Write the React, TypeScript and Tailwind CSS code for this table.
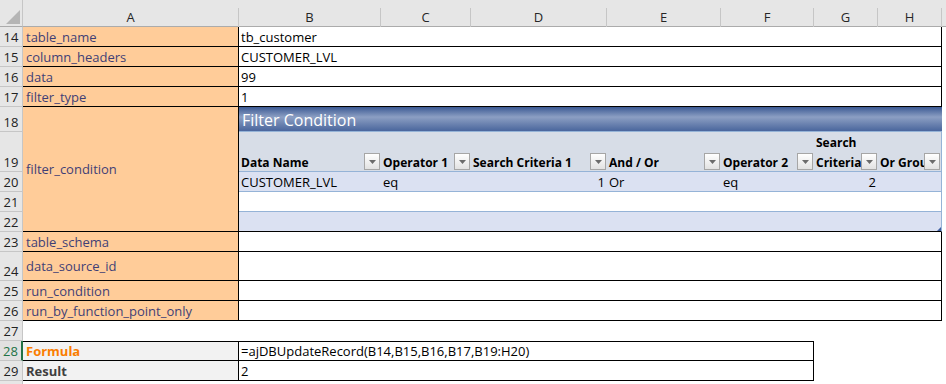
import React from "react";

const letters = ["A", "B", "C", "D", "E", "F", "G", "H"];

const rowHead =
  "flex items-end justify-center bg-[#e6e6e6] border-b border-r border-[#c6c6c6] text-[13px] leading-[18px] text-[#222]";
const label =
  "flex items-center bg-[#ffcc99] border-b border-r border-black pl-[3px] pt-[2px] text-[13px] text-[#3f3f76] whitespace-nowrap overflow-hidden";
const value =
  "col-span-7 flex items-center bg-white border-b border-r border-black pl-[2px] pt-[2px] text-[13px] text-black whitespace-nowrap";

const params = [
  { n: 14, name: "table_name", v: "tb_customer" },
  { n: 15, name: "column_headers", v: "CUSTOMER_LVL" },
  { n: 16, name: "data", v: "99" },
  { n: 17, name: "filter_type", v: "1" },
];

const params2 = [
  { n: 23, name: "table_schema" },
  { n: 24, name: "data_source_id" },
  { n: 25, name: "run_condition" },
  { n: 26, name: "run_by_function_point_only" },
];

const headers = [
  "Data Name",
  "Operator 1",
  "Search Criteria 1",
  "And / Or",
  "Operator 2",
  "Search Criteria 2",
  "Or Group",
];

const body = [
  [
    { t: "CUSTOMER_LVL" },
    { t: "eq" },
    { t: "1", r: true },
    { t: "Or" },
    { t: "eq" },
    { t: "2", r: true },
    { t: "" },
  ],
  [{}, {}, {}, {}, {}, {}, {}],
  [{}, {}, {}, {}, {}, {}, {}],
] as { t?: string; r?: boolean }[][];

function Dropdown() {
  return (
    <div className="absolute right-[1px] bottom-[1px] flex h-[17px] w-[16px] items-center justify-center border border-[#a6a6a6] bg-[linear-gradient(to_bottom,#ffffff,#e2e2e2)]">
      <svg width="7" height="4" viewBox="0 0 7 4">
        <path d="M0 0h7L3.5 4z" fill="#6b6b6b" />
      </svg>
    </div>
  );
}

export default function App() {
  return (
    <div className="grid h-[384px] w-[946px] grid-cols-[23px_216px_142px_90px_136px_114px_93px_64px_64px_4px] grid-rows-[27px_20px_20px_20px_20px_25px_40px_20px_20px_20px_20px_29px_20px_20px_20px_20px_20px_3px] overflow-hidden bg-white font-['Open_Sans',sans-serif]">
      {/* column headers */}
      <div className="flex items-end justify-end border-r border-b border-r-[#c6c6c6] border-b-[#ababab] bg-[#e6e6e6] p-[2px]">
        <svg width="14" height="14" viewBox="0 0 14 14">
          <path d="M14 0V14H0z" fill="#b5b5b5" />
        </svg>
      </div>
      {letters.map((l) => (
        <div key={l} className="flex flex-col border-b border-[#ababab] bg-[#e6e6e6] pt-[8px]">
          <div className="flex flex-1 items-center justify-center border-r border-[#c6c6c6] text-[13px] text-[#262626]">
            {l}
          </div>
        </div>
      ))}
      <div className="border-b border-[#ababab] bg-[#e6e6e6]" />

      {/* rows 14-17 */}
      {params.map((p) => (
        <React.Fragment key={p.n}>
          <div className={rowHead}>{p.n}</div>
          <div className={label}>{p.name}</div>
          <div className={value}>{p.v}</div>
          <div />
        </React.Fragment>
      ))}

      {/* row 18: table title */}
      <div className={rowHead}>18</div>
      <div className="row-span-5 flex items-center bg-[#ffcc99] border-b border-r border-black pl-[3px] pt-[2px] text-[13px] text-[#3f3f76]">
        filter_condition
      </div>
      <div className="col-span-7 flex items-end border-b border-[#95b3d7] bg-[linear-gradient(to_bottom,#3c5a94_0%,#8c9fc3_42%,#6c83b0_70%,#4a669d_100%)] pb-[1px] pl-[3px] text-[16px] leading-[20px] text-white">
        Filter Condition
      </div>
      <div />

      {/* row 19: table headers */}
      <div className={rowHead}>19</div>
      {headers.map((h, i) => (
        <div
          key={h}
          className={
            "relative flex items-end overflow-hidden border-b border-[#95b3d7] bg-[#d7dde7] pl-[2px] text-[12px] font-bold leading-[20px] text-black " +
            (i === 5 ? "whitespace-normal " : "whitespace-nowrap ") +
            (i === 6 ? "border-r" : "")
          }
        >
          <span className="mb-[-2px]">{h}</span>
          <Dropdown />
        </div>
      ))}
      <div />

      {/* rows 20-22: table body */}
      {body.map((row, ri) => (
        <React.Fragment key={ri}>
          <div className={rowHead}>{20 + ri}</div>
          {row.map((c, ci) => (
            <div
              key={ci}
              className={
                "relative flex items-center whitespace-nowrap border-b px-[2px] pt-[2px] text-[13px] text-black " +
                (ri === 1 ? "bg-white " : "bg-[#dbe1f2] ") +
                (ri === 2 ? "border-b-black " : "border-b-[#95b3d7] ") +
                (ci === 6 ? "border-r border-r-[#95b3d7] " : "") +
                (c.r ? "justify-end" : "")
              }
            >
              {c.t}
              {ri === 2 && ci === 6 && (
                <svg className="absolute right-0 bottom-0" width="4" height="4" viewBox="0 0 4 4">
                  <path d="M4 0V4H0z" fill="#3f5ea0" />
                </svg>
              )}
            </div>
          ))}
          <div />
        </React.Fragment>
      ))}

      {/* rows 23-26 */}
      {params2.map((p) => (
        <React.Fragment key={p.n}>
          <div className={rowHead}>{p.n}</div>
          <div className={label}>{p.name}</div>
          <div className={value} />
          <div />
        </React.Fragment>
      ))}

      {/* row 27 */}
      <div className={rowHead}>27</div>
      <div className="col-span-9" />

      {/* row 28 */}
      <div className="flex items-end justify-center border-b border-r-2 border-b-[#c6c6c6] border-r-[#217346] bg-[#e1e1e1] text-[13px] leading-[18px] text-[#217346]">
        28
      </div>
      <div className="flex items-center border-t border-b border-r border-black bg-[#f2f2f2] pl-[3px] pt-[2px] text-[13px] font-bold text-[#fa7d00]">
        Formula
      </div>
      <div className="col-span-5 flex items-center border-t border-b border-r border-black bg-white pl-[2px] pt-[2px] text-[13px] text-black whitespace-nowrap">
        =ajDBUpdateRecord(B14,B15,B16,B17,B19:H20)
      </div>
      <div className="col-span-3" />

      {/* row 29 */}
      <div className={rowHead}>29</div>
      <div className="flex items-center border-b border-r border-black bg-[#f2f2f2] pl-[3px] pt-[2px] text-[13px] font-bold text-[#3f3f3f]">
        Result
      </div>
      <div className="col-span-5 flex items-center border-b border-r border-black bg-white pl-[2px] pt-[2px] text-[13px] text-black">
        2
      </div>
      <div className="col-span-3" />

      {/* row 30 (cut off) */}
      <div className="border-r border-[#c6c6c6] bg-[#e6e6e6]" />
      <div className="col-span-9" />
    </div>
  );
}
